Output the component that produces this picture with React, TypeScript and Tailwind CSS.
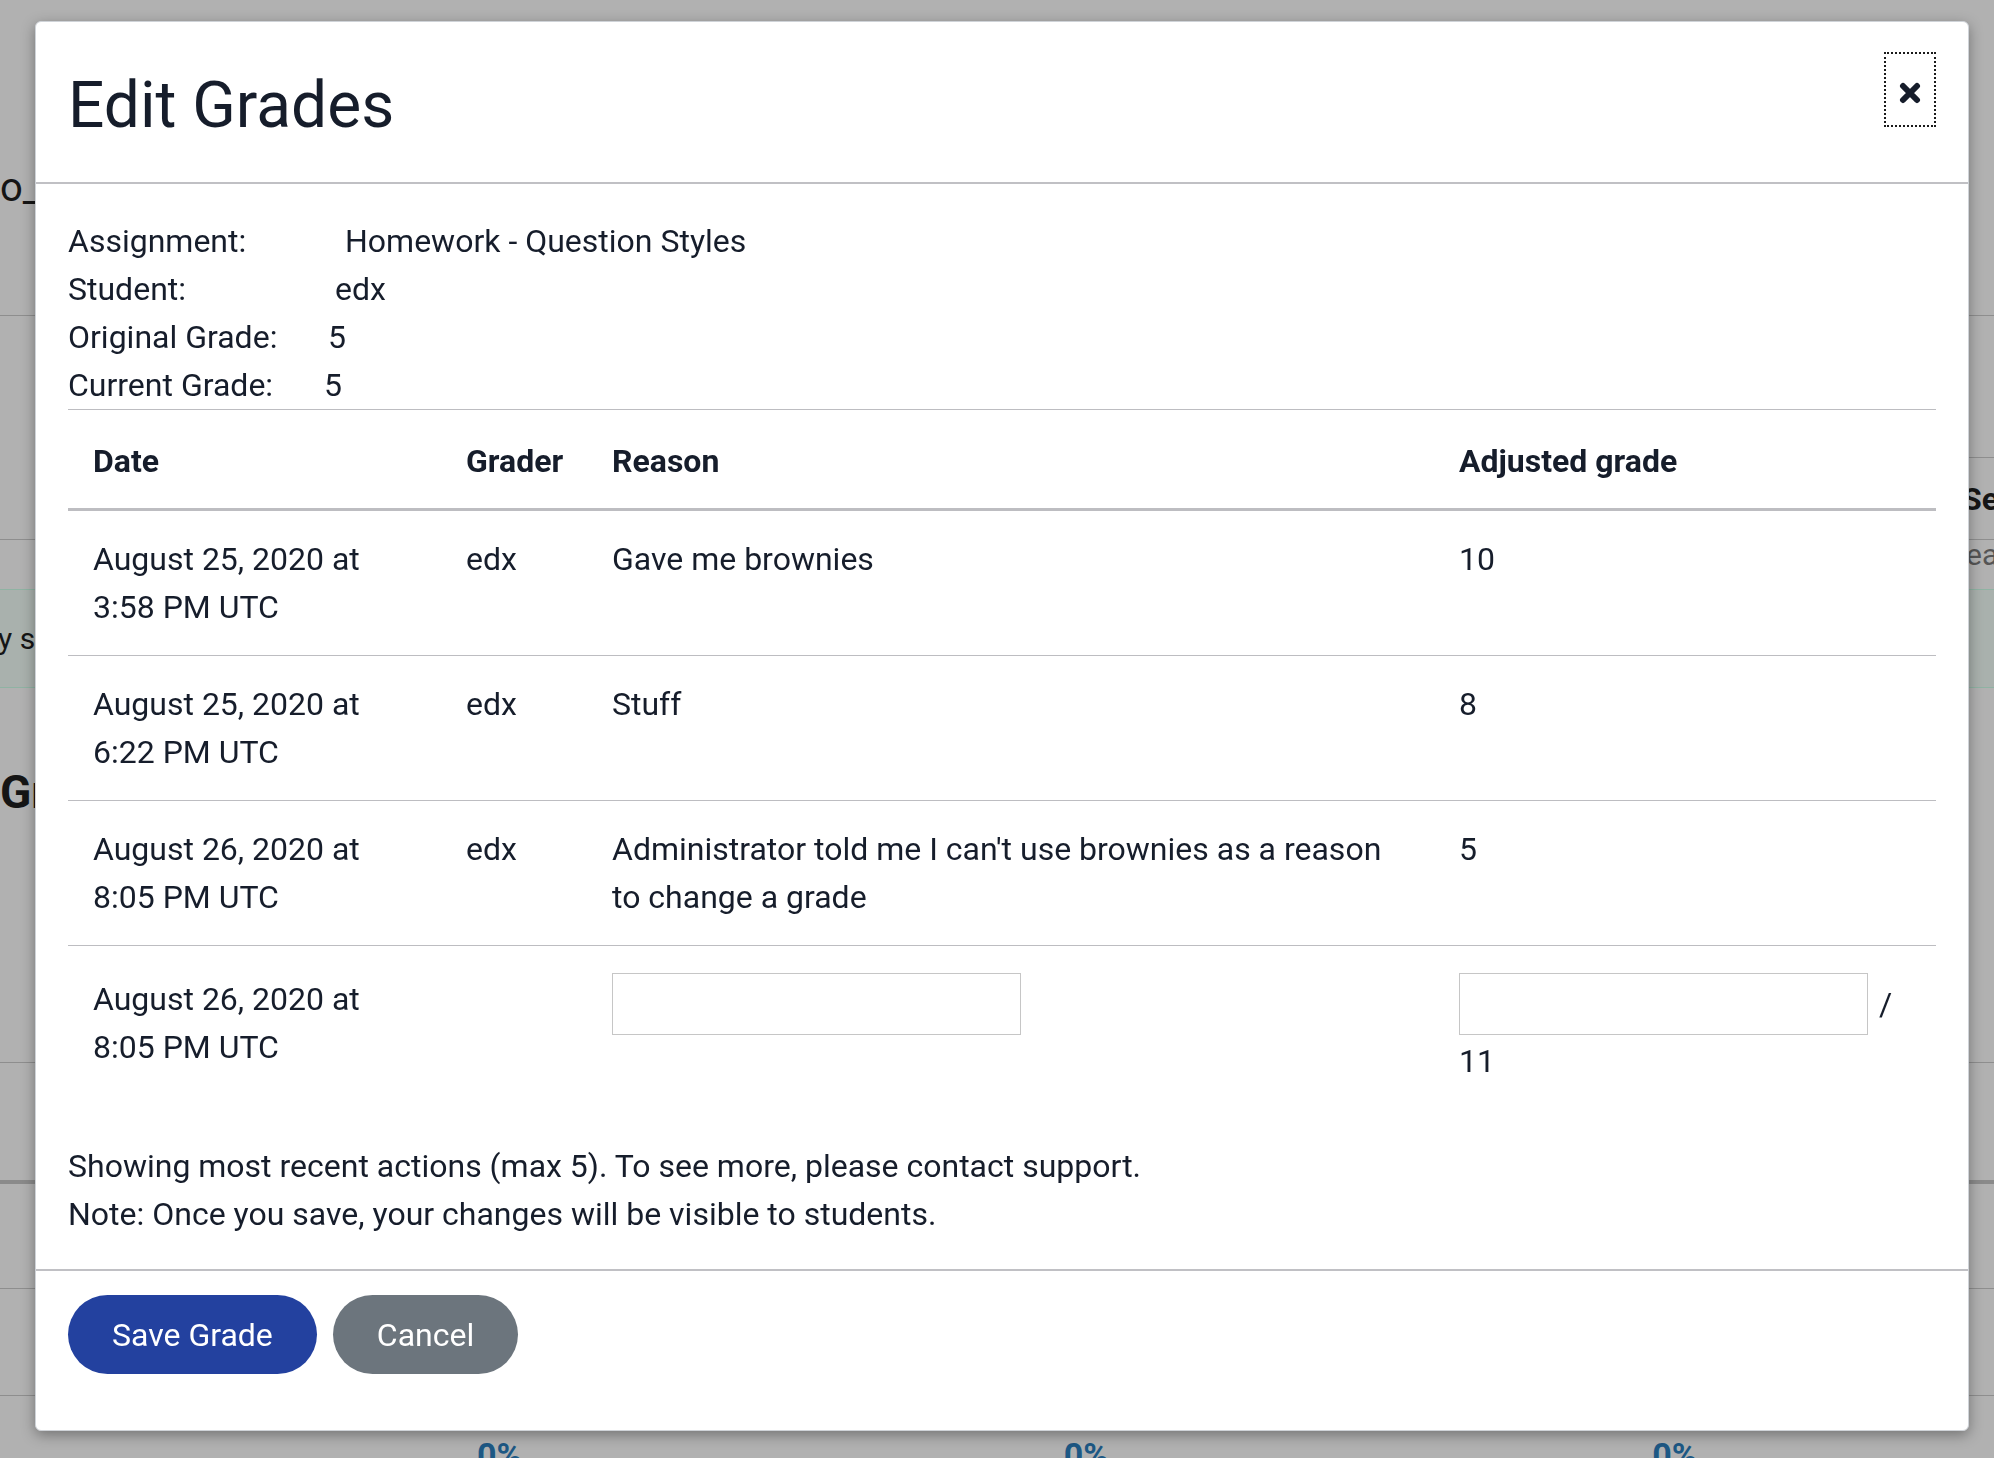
const info = [
  { label: "Assignment:", value: "Homework - Question Styles", w: "w-[277px]" },
  { label: "Student:", value: "edx", w: "w-[267px]" },
  { label: "Original Grade:", value: "5", w: "w-[260px]" },
  { label: "Current Grade:", value: "5", w: "w-[256px]" },
];

const history = [
  { date: "August 25, 2020 at", time: "3:58 PM UTC", grader: "edx", reason: ["Gave me brownies"], grade: "10" },
  { date: "August 25, 2020 at", time: "6:22 PM UTC", grader: "edx", reason: ["Stuff"], grade: "8" },
  {
    date: "August 26, 2020 at",
    time: "8:05 PM UTC",
    grader: "edx",
    reason: ["Administrator told me I can't use brownies as a reason", "to change a grade"],
    grade: "5",
  },
];

const cols = "grid grid-cols-[373px_146px_847px_1fr]";

function Background() {
  return (
    <div className="h-[1458px] w-full overflow-hidden bg-[#b1b1b1] text-[#151515]">
      <div className="h-[316px] border-b border-[#8e8e8e] pt-[160px] text-[40px] leading-[56px]">o_</div>
      <div className="flex h-[142px] justify-end">
        <div className="w-[600px] border-b border-[#8e8e8e]" />
      </div>
      <div className="flex h-[82px] items-center border-b border-[#8e8e8e] pl-[1962px] text-[32px] font-bold whitespace-nowrap">
        Search
      </div>
      <div className="h-[49px] pl-[1966px] text-[30px] leading-[30px] text-[#555] whitespace-nowrap">earn</div>
      <div className="flex h-[99px] items-center border-y border-[#8fb3a3] bg-[#a9b1ad] text-[30px] whitespace-nowrap">
        <span className="ml-[-2px]">y s</span>
      </div>
      <div className="h-[374px] pt-[70px] text-[46px] font-bold">Gr</div>
      <div className="h-[118px] border-t border-[#8e8e8e]" />
      <div className="h-[108px] border-t-4 border-[#8a8a8a]" />
      <div className="h-[107px] border-t border-[#8e8e8e]" />
      <div className="grid grid-cols-3 border-t border-[#8e8e8e] pt-[34px] text-[34px] font-bold text-[#1d5884]">
        <span className="pl-[477px]">0%</span>
        <span className="pl-[399px]">0%</span>
        <span className="pl-[323px]">0%</span>
      </div>
    </div>
  );
}

export default function App() {
  return (
    <div className="relative font-['Roboto',sans-serif]">
      <Background />

      <div className="fixed left-[35px] top-[21px] w-[1934px] rounded-md border border-[#cfd3d8] bg-white text-[32px] leading-[48px] text-[#161d2b] shadow-[0_4px_14px_rgba(0,0,0,0.35)]">
        <div className="flex items-start justify-between border-b-2 border-[#c0c0c4] px-[32px] pt-[30px] pb-[38px]">
          <h2 className="mt-[15px] text-[64px] leading-[77px] font-normal">Edit Grades</h2>
          <button className="flex h-[75px] w-[52px] items-center justify-center border-2 border-dotted border-[#1a1a1a]">
            <svg width="22" height="22" viewBox="0 0 22 22" className="mt-[6px]">
              <path d="M4 4 L18 18 M18 4 L4 18" stroke="#161d2b" strokeWidth="6" strokeLinecap="round" />
            </svg>
          </button>
        </div>

        <div className="px-[32px] pt-[33px] pb-[31px]">
          <div>
            {info.map((row) => (
              <div key={row.label} className="flex">
                <span className={row.w}>{row.label}</span>
                <span>{row.value}</span>
              </div>
            ))}
          </div>

          <div className="border-t border-[#bdbdc1]">
            <div className={`${cols} border-b-[3px] border-[#bdbdc1] font-bold`}>
              <div className="pl-[25px] pt-[27px] pb-[23px]">Date</div>
              <div className="pl-[25px] pt-[27px] pb-[23px]">Grader</div>
              <div className="pl-[25px] pt-[27px] pb-[23px]">Reason</div>
              <div className="pl-[25px] pt-[27px] pb-[23px]">Adjusted grade</div>
            </div>

            {history.map((h, i) => (
              <div key={i} className={`${cols} border-b border-[#bdbdc1]`}>
                <div className="pl-[25px] py-[24px]">
                  <div>{h.date}</div>
                  <div>{h.time}</div>
                </div>
                <div className="pl-[25px] py-[24px]">{h.grader}</div>
                <div className="pl-[25px] py-[24px]">
                  {h.reason.map((line) => (
                    <div key={line}>{line}</div>
                  ))}
                </div>
                <div className="pl-[25px] py-[24px]">{h.grade}</div>
              </div>
            ))}

            <div className={`${cols} pb-[24px]`}>
              <div className="pl-[25px] pt-[29px]">
                <div>August 26, 2020 at</div>
                <div>8:05 PM UTC</div>
              </div>
              <div />
              <div className="pl-[25px] pt-[27px]">
                <input type="text" className="h-[62px] w-[409px] border border-[#c6c6c6] px-3 outline-none" />
              </div>
              <div className="pl-[25px] pt-[27px]">
                <div className="flex items-center">
                  <input type="text" className="h-[62px] w-[409px] border border-[#c6c6c6] px-3 outline-none" />
                  <span className="ml-[11px]">/</span>
                </div>
                <div className="mt-[2px]">11</div>
              </div>
            </div>
          </div>

          <div className="mt-[33px]">
            <p>Showing most recent actions (max 5). To see more, please contact support.</p>
            <p>Note: Once you save, your changes will be visible to students.</p>
          </div>
        </div>

        <div className="flex gap-[16px] border-t-2 border-[#c0c0c4] px-[32px] pt-[24px] pb-[56px]">
          <button className="h-[79px] rounded-full bg-[#23419f] px-[44px] text-white">Save Grade</button>
          <button className="h-[79px] rounded-full bg-[#6c757d] px-[44px] text-white">Cancel</button>
        </div>
      </div>
    </div>
  );
}
